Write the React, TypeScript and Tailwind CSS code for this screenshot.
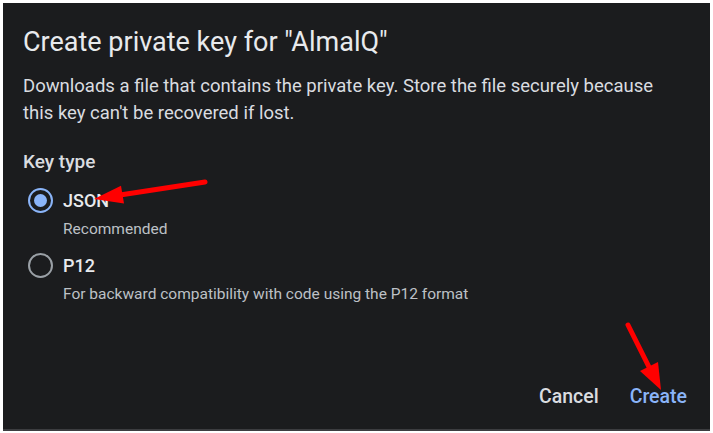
import React, { useState } from 'react';

type KeyType = 'json' | 'p12';

const options: { id: KeyType; label: string; hint: string }[] = [
  { id: 'json', label: 'JSON', hint: 'Recommended' },
  { id: 'p12', label: 'P12', hint: 'For backward compatibility with code using the P12 format' },
];

const Radio: React.FC<{ checked: boolean }> = ({ checked }) => (
  <span
    className={`flex h-[25px] w-[25px] shrink-0 items-center justify-center rounded-full border-[2.5px] ${
      checked ? 'border-[#8ab4f8]' : 'border-[#9aa0a6]'
    }`}
  >
    {checked && <span className="h-[13px] w-[13px] rounded-full bg-[#8ab4f8]" />}
  </span>
);

export default function App() {
  const [keyType, setKeyType] = useState<KeyType>('json');

  return (
    <div className="relative h-[433px] w-[713px] bg-white font-['Roboto',sans-serif]">
      <div className="ml-[3px] mt-[3px] flex h-[428px] w-[707px] flex-col border-b-2 border-[#3c3d40] bg-[#1b1c1e] pt-[22px] pl-[20px] pr-[11px] pb-[14px]">
        <h1 className="text-[27px] leading-[34px] font-normal text-[#e8eaed]">
          Create private key for "AlmalQ"
        </h1>
        <p className="mt-[14px] text-[18.5px] leading-[27px] text-[#dadce0]">
          Downloads a file that contains the private key. Store the file securely because
          <br />
          this key can't be recovered if lost.
        </p>

        <div className="mt-[23px] text-[19px] leading-[24px] font-medium text-[#dadce0]">Key type</div>

        <div className="mt-[13px] flex flex-col gap-[13px]">
          {options.map((o) => (
            <label key={o.id} className="flex cursor-pointer flex-col" onClick={() => setKeyType(o.id)}>
              <span className="flex h-[26px] items-center">
                <span className="ml-[5px]">
                  <Radio checked={keyType === o.id} />
                </span>
                <span className="ml-[10px] text-[18px] font-medium text-[#e8eaed]">{o.label}</span>
              </span>
              <span className="mt-[6px] pl-[40px] text-[15.5px] leading-[20px] text-[#bdc1c6]">{o.hint}</span>
            </label>
          ))}
        </div>

        <div className="mt-auto flex justify-end gap-[7px]">
          <button className="h-9 rounded px-3 text-[19.5px] font-medium text-[#dadce0]">Cancel</button>
          <button className="h-9 rounded px-3 text-[19.5px] font-medium text-[#8ab4f8]">Create</button>
        </div>
      </div>

      <svg className="pointer-events-none absolute inset-0" width="713" height="433" viewBox="0 0 713 433">
        <line x1="205" y1="179" x2="120" y2="192" stroke="#ff0000" strokeWidth="5" strokeLinecap="round" />
        <polygon points="94,196 121,182.7 124,200.5" fill="#ff0000" />
        <line x1="628" y1="322" x2="650" y2="366" stroke="#ff0000" strokeWidth="5" strokeLinecap="round" />
        <polygon points="661,387 640,368 658,359" fill="#ff0000" />
      </svg>
    </div>
  );
}
